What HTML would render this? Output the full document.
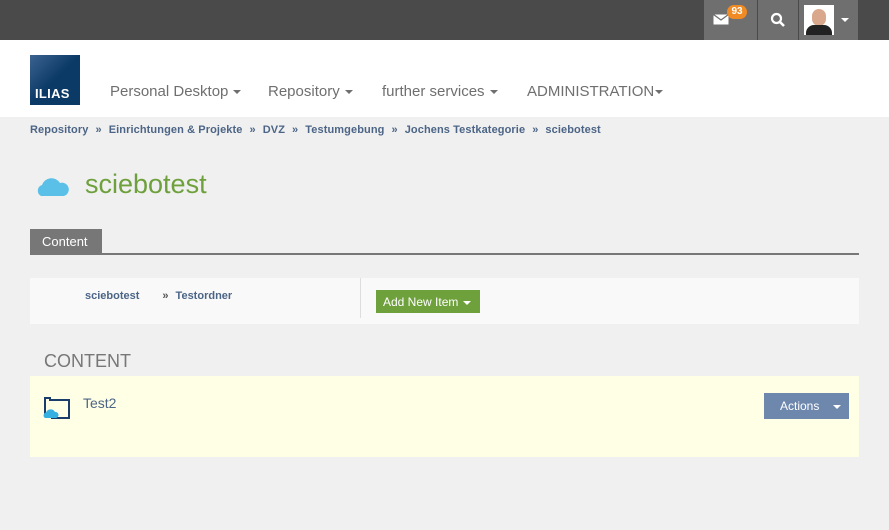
<!DOCTYPE html>
<html><head><meta charset="utf-8"><style>
*{margin:0;padding:0;box-sizing:border-box}
body{width:889px;height:530px;background:#f0f0f0;font-family:"Liberation Sans",sans-serif;position:relative;overflow:hidden}
.top{position:absolute;left:0;top:0;width:889px;height:40px;background:#4a4a4a}
.tb{position:absolute;top:0;height:40px;background:#6f6f6f}
.hdr{position:absolute;left:0;top:40px;width:889px;height:77px;background:#fff}
.logo{position:absolute;left:30px;top:55px;width:50px;height:50px;background:linear-gradient(135deg,#3c6290,#0b3a66 50%);color:#fff;font-weight:bold;font-size:13px;padding:31px 0 0 5px;letter-spacing:.3px}
.nav{position:absolute;top:83px;font-size:15px;color:#6f6f6f}
.car{display:inline-block;width:0;height:0;border-left:4px solid transparent;border-right:4px solid transparent;border-top:4px solid currentColor;vertical-align:middle;margin-left:5px}
.bc{position:absolute;left:30px;top:124px;font-size:11px;font-weight:bold;color:#4c6586;letter-spacing:.1px}
.bc span{color:#4c6586;margin:0 7px}
h1{position:absolute;left:85px;top:169px;font-size:27px;font-weight:normal;color:#6ea03c}
.tab{position:absolute;left:30px;top:229px;width:72px;height:25px;background:#777;color:#fff;font-size:13px;padding:5px 0 0 12px}
.tline{position:absolute;left:30px;top:253px;width:829px;height:2px;background:#777}
.bar{position:absolute;left:30px;top:278px;width:829px;height:46px;background:#f9f9f9}
.sep{position:absolute;left:360px;top:278px;width:1px;height:40px;background:#ddd}
.add{position:absolute;left:376px;top:290px;width:104px;height:23px;background:#6ea03c;color:#fff;font-size:12px;padding:5px 0 0 7px}
.ch{position:absolute;left:44px;top:351px;font-size:18px;color:#777}
.item{position:absolute;left:30px;top:376px;width:829px;height:81px;background:#ffffe6}
.act{position:absolute;left:764px;top:393px;width:85px;height:26px;background:#6e88ad;color:#fff;font-size:12px;padding:6px 0 0 16px}
</style></head><body>
<div class="top"></div>
<div class="tb" style="left:704px;width:53px"></div>
<div class="tb" style="left:758px;width:40px"></div>
<div class="tb" style="left:799px;width:59px"></div>
<svg style="position:absolute;left:713px;top:14px" width="16" height="11"><rect x="0.5" y="0.5" width="15" height="10" fill="#fff"/><path d="M0.5 0.5 L8 6 L15.5 0.5" stroke="#6f6f6f" stroke-width="1.3" fill="none"/></svg>
<div style="position:absolute;left:727px;top:5px;width:20px;height:14px;border-radius:7px;background:#f08a24;color:#fff;font-size:10px;font-weight:bold;text-align:center;line-height:14px">93</div>
<svg style="position:absolute;left:770px;top:12px" width="16" height="16"><circle cx="6.5" cy="6.5" r="4.5" stroke="#fff" stroke-width="2.2" fill="none"/><path d="M10 10 L14 14" stroke="#fff" stroke-width="2.6"/></svg>
<div style="position:absolute;left:804px;top:5px;width:30px;height:30px;background:#fff;overflow:hidden"><div style="position:absolute;left:8px;top:4px;width:14px;height:17px;border-radius:7px;background:#d9a88c"></div><div style="position:absolute;left:2px;top:20px;width:26px;height:14px;border-radius:8px 8px 0 0;background:#222"></div></div>
<div style="position:absolute;left:841px;top:18px;border-left:4px solid transparent;border-right:4px solid transparent;border-top:4px solid #fff"></div>
<div class="hdr"></div>
<div class="logo">ILIAS</div>
<div class="nav" style="left:110px">Personal Desktop<span class="car"></span></div>
<div class="nav" style="left:268px">Repository<span class="car"></span></div>
<div class="nav" style="left:382px">further services<span class="car"></span></div>
<div class="nav" style="left:527px">ADMINISTRATION<span class="car" style="margin-left:1px"></span></div>
<div class="bc">Repository<span>»</span>Einrichtungen &amp; Projekte<span>»</span>DVZ<span>»</span>Testumgebung<span>»</span>Jochens Testkategorie<span>»</span>sciebotest</div>
<svg style="position:absolute;left:35px;top:175px" width="35" height="21"><path d="M6 21 A6 6 0 0 1 7 10 A10 10 0 0 1 25 8 A6.5 6.5 0 0 1 29 21 Z" fill="#5bc0e8"/></svg>
<h1>sciebotest</h1>
<div class="tab">Content</div>
<div class="tline"></div>
<div class="bar"></div>
<div class="sep"></div>
<div style="position:absolute;left:85px;top:290px;font-size:11px;font-weight:bold;color:#4c6586">sciebotest<span style="margin:0 7px 0 23px;color:#555">»</span>Testordner</div>
<div class="add">Add New Item<span class="car"></span></div>
<div class="ch">CONTENT</div>
<div class="item"></div>
<svg style="position:absolute;left:43px;top:397px" width="28" height="22"><path d="M2 18 V1 H7 V3 H26 V21 H8" stroke="#1a3d6b" stroke-width="2" fill="none"/><path d="M2 21 A3 3 0 0 1 3 15.5 A5 5 0 0 1 12 15 A3 3 0 0 1 13 21 Z" fill="#36b0e0"/></svg>
<div style="position:absolute;left:83px;top:395px;font-size:14px;color:#4c6586">Test2</div>
<div class="act">Actions<span class="car" style="margin-left:14px"></span></div>
</body></html>
